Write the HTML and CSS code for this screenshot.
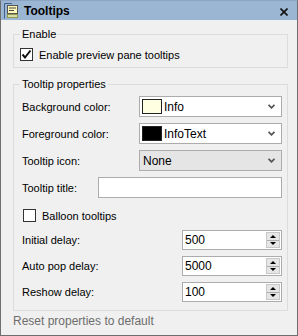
FILE: index.html
```html
<!DOCTYPE html>
<html>
<head>
<meta charset="utf-8">
<link rel="stylesheet" href="styles.css">
</head>
<body>
<div class="window">
  <div class="titlebar">
    <svg class="app-icon" width="16" height="16" viewBox="0 0 16 16">
      <path d="M0.5 15.5 V0.5 H8" fill="none" stroke="#3c5f8c" stroke-width="1"/>
      <rect x="3.5" y="2.5" width="10" height="8" fill="#fff7b8" stroke="#555" stroke-width="1"/>
      <path d="M5 5 H12 M5 7.5 H10" stroke="#444" stroke-width="1"/>
      <rect x="3" y="11" width="11" height="4" fill="#8f9a4c"/>
      <rect x="4" y="12" width="9" height="2" fill="#d7dca8"/>
    </svg>
    <span class="title">Tooltips</span>
    <svg class="close" width="8" height="8" viewBox="0 0 8 8"><path d="M0.5 0.5 L7.5 7.5 M7.5 0.5 L0.5 7.5" stroke="#111" stroke-width="1.6"/></svg>
  </div>
  <div class="content">
    <fieldset class="group group-enable">
      <legend>Enable</legend>
      <label class="check-row">
        <span class="checkbox checked">
          <svg width="11" height="11" viewBox="0 0 11 11"><path d="M1.5 5.5 L4 8.5 L9.5 1.5" fill="none" stroke="#111" stroke-width="2"/></svg>
        </span>
        <span>Enable preview pane tooltips</span>
      </label>
    </fieldset>
    <fieldset class="group group-props">
      <legend>Tooltip properties</legend>
      <div class="row">
        <span class="label">Background color:</span>
        <div class="combo">
          <span class="swatch" style="background:#ffffe1"></span>
          <span class="combo-text">Info</span>
          <svg class="chev" width="7" height="5" viewBox="0 0 7 5"><path d="M0.5 0.8 L3.5 3.8 L6.5 0.8" fill="none" stroke="#555" stroke-width="1.8"/></svg>
        </div>
      </div>
      <div class="row">
        <span class="label">Foreground color:</span>
        <div class="combo">
          <span class="swatch" style="background:#000000"></span>
          <span class="combo-text">InfoText</span>
          <svg class="chev" width="7" height="5" viewBox="0 0 7 5"><path d="M0.5 0.8 L3.5 3.8 L6.5 0.8" fill="none" stroke="#555" stroke-width="1.8"/></svg>
        </div>
      </div>
      <div class="row">
        <span class="label">Tooltip icon:</span>
        <div class="combo combo-list">
          <span class="combo-text plain">None</span>
          <svg class="chev" width="7" height="5" viewBox="0 0 7 5"><path d="M0.5 0.8 L3.5 3.8 L6.5 0.8" fill="none" stroke="#555" stroke-width="1.8"/></svg>
        </div>
      </div>
      <div class="row">
        <span class="label">Tooltip title:</span>
        <div class="textbox"></div>
      </div>
      <label class="check-row balloon">
        <span class="checkbox"></span>
        <span>Balloon tooltips</span>
      </label>
      <div class="row spin-row first-spin">
        <span class="label">Initial delay:</span>
        <div class="spin"><span class="spin-value">500</span><span class="spin-btns"><span class="up"></span><span class="down"></span></span></div>
      </div>
      <div class="row spin-row">
        <span class="label">Auto pop delay:</span>
        <div class="spin"><span class="spin-value">5000</span><span class="spin-btns"><span class="up"></span><span class="down"></span></span></div>
      </div>
      <div class="row spin-row">
        <span class="label">Reshow delay:</span>
        <div class="spin"><span class="spin-value">100</span><span class="spin-btns"><span class="up"></span><span class="down"></span></span></div>
      </div>
    </fieldset>
    <div class="reset">Reset properties to default</div>
  </div>
</div>
</body>
</html>
```
FILE: styles.css
```css
html, body {
  margin: 0;
  padding: 0;
  background: #f0f0f0;
}
body {
  font-family: "Liberation Sans", Arial, sans-serif;
  font-size: 11px;
  color: #000;
}
.window {
  width: 298px;
  height: 336px;
  box-sizing: border-box;
  border: 1px solid #6e6e6e;
  border-top-color: #8aa4c2;
  background: #f0f0f0;
  display: flex;
  flex-direction: column;
}
.titlebar {
  height: 19px;
  background: #9bb6d3;
  display: flex;
  align-items: center;
  padding-left: 3px;
  flex: none;
}
.app-icon {
  display: block;
}
.title {
  font-weight: bold;
  font-size: 12px;
  margin-left: 4px;
  color: #000;
}
.close {
  display: block;
  margin-left: auto;
  margin-right: 9px;
  margin-top: 2px;
}
.content {
  padding: 7px 9px 0 12px;
  display: flex;
  flex-direction: column;
}
.group {
  margin: 0;
  border: 1px solid #dcdcdc;
  padding: 0 5px 0 6px;
  min-width: 0;
}
.group legend {
  padding: 0 2px;
  margin-left: 0;
  line-height: 14px;
  height: 14px;
}
.group-enable {
  padding-bottom: 6px;
}
.check-row {
  display: flex;
  align-items: center;
  height: 13px;
  margin-top: 7px;
}
.checkbox {
  width: 11px;
  height: 11px;
  border: 1px solid #333;
  background: #fff;
  display: flex;
  align-items: center;
  justify-content: center;
  margin-right: 6px;
  flex: none;
}
.checkbox svg {
  display: block;
}
.group-props {
  margin-top: 9px;
  padding-bottom: 8px;
}
.row {
  display: flex;
  align-items: center;
  height: 21px;
  margin-top: 6px;
}
.row:first-of-type {
  margin-top: 5px;
}
.label {
  padding-left: 2px;
}
.combo {
  margin-left: auto;
  width: 143px;
  height: 21px;
  box-sizing: border-box;
  border: 1px solid #acacac;
  background: #fff;
  display: flex;
  align-items: center;
  padding-left: 2px;
}
.combo-list {
  background: #e5e5e5;
}
.swatch {
  width: 18px;
  height: 13px;
  border: 1px solid #222;
  flex: none;
}
.combo-text {
  margin-left: 2px;
  font-size: 12px;
}
.combo-text.plain {
  margin-left: 1px;
}
.chev {
  display: block;
  margin-left: auto;
  margin-right: 6px;
}
.textbox {
  margin-left: auto;
  width: 184px;
  height: 21px;
  box-sizing: border-box;
  border: 1px solid #acacac;
  background: #fff;
}
.balloon {
  margin-top: 11px;
  padding-left: 3px;
}
.spin-row {
  height: 20px;
}
.first-spin {
  margin-top: 8px;
}
.spin {
  margin-left: auto;
  width: 100px;
  height: 20px;
  box-sizing: border-box;
  border: 1px solid #acacac;
  background: #fff;
  display: flex;
  align-items: center;
}
.spin-value {
  padding-left: 2px;
  font-size: 12px;
}
.spin-btns {
  margin-left: auto;
  margin-right: 1px;
  width: 14px;
  height: 16px;
  display: flex;
  flex-direction: column;
  gap: 1px;
  background: #acacac;
  border: 1px solid #c8c8c8;
  box-sizing: border-box;
}
.spin-btns span {
  flex: 1;
  background: #e6e6e6;
  display: flex;
  align-items: center;
  justify-content: center;
}
.spin-btns .up::before {
  content: "";
  border-left: 3px solid transparent;
  border-right: 3px solid transparent;
  border-bottom: 3px solid #000;
}
.spin-btns .down::before {
  content: "";
  border-left: 3px solid transparent;
  border-right: 3px solid transparent;
  border-top: 3px solid #000;
}
.reset {
  margin-top: 3px;
  color: #6d6d6d;
  font-size: 12px;
}
```
